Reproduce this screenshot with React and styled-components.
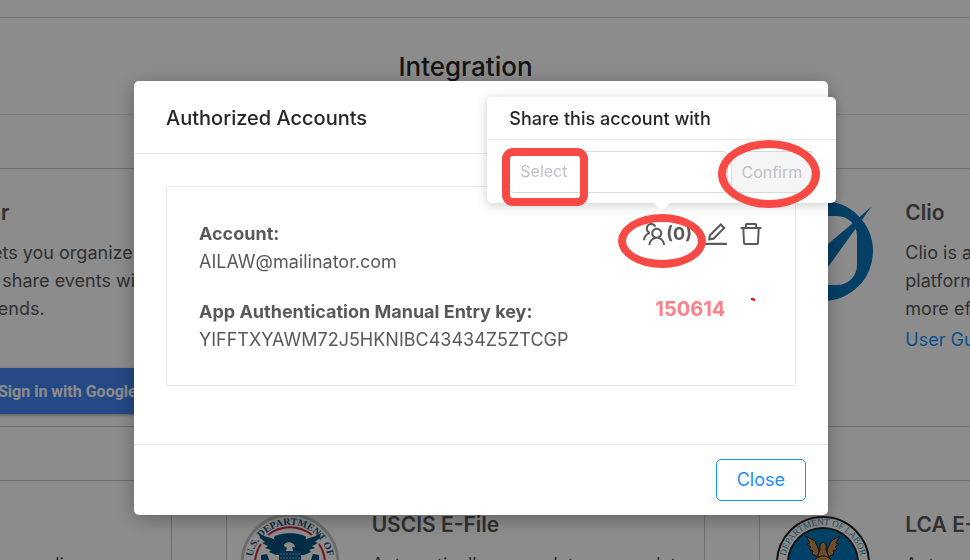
import { useState } from "react";
import styled, { createGlobalStyle } from "styled-components";
import { AiOutlineDelete, AiOutlineEdit, AiOutlineTeam } from "react-icons/ai";

const ClioLogo = () => (
  <svg width="100" height="100" viewBox="0 0 100 100" fill="#0a74b8">
    <path
      fillRule="evenodd"
      d="M50 0a50 50 0 1 0 0 100a50 50 0 1 0 0-100zM36 15h28a20 20 0 0 1 20 20v29a20 20 0 0 1-20 20H36a20 20 0 0 1-20-20V35a20 20 0 0 1 20-20z"
    />
    <path d="M99 5L55 66L38 86L24 60L36 58L55 43L80 22z" />
  </svg>
);

const HomelandSeal = () => (
  <svg width="100" height="100" viewBox="0 0 100 100">
    <circle cx="50" cy="50" r="48" fill="#fff" stroke="#c4c4c4" strokeWidth="3" />
    <path id="homeland-arc" d="M13 58.600A38 38 0 1 1 87 58.600" fill="none" />
    <text fill="#12507f" fontSize="10" fontFamily="Liberation Serif, serif" fontWeight="700">
      <textPath href="#homeland-arc" startOffset="50%" textAnchor="middle">
        U.S. DEPARTMENT OF
      </textPath>
    </text>
    <g fill="none" stroke="#d0203f" strokeWidth="2">
      <path d="M28 22A35 35 0 0 1 72 22" />
      <path d="M15 50A35 35 0 0 1 21 31" />
      <path d="M79 31A35 35 0 0 1 85 50" />
    </g>
    <g fill="#07507f">
      <path d="M34 24C40 19 60 19 66 24L64 38H36z" />
      <path d="M19 20L24 23L31 25L36 27L42 33L43 42L36 42L29 39L31 37L25 35L28 33L22 30L25 29L20 25z" />
      <path d="M81 20L76 23L69 25L64 27L58 33L57 42L64 42L71 39L69 37L75 35L72 33L78 30L75 29L80 25z" />
      <path d="M21 42L27 41L31 52H21zM79 42L73 41L69 52H79z" />
    </g>
    <path d="M44 33C44 28 54 28 55 34L52 34L54 40H45L47 35z" fill="#fff" />
    <path d="M39 38H61V52H39z" fill="#0e5e94" />
    <path d="M40 41H60M40 45H60M40 49H60" stroke="#8aaec8" strokeWidth="1" strokeDasharray="2 1" />
  </svg>
);

const LaborSeal = () => (
  <svg width="100" height="100" viewBox="0 0 100 100">
    <circle cx="50" cy="50" r="46" fill="#fff" stroke="#222" strokeWidth="2" />
    <circle cx="50" cy="50" r="35" fill="#0078bc" stroke="#222" strokeWidth="2" />
    <path id="labor-arc" d="M13 58.600A38 38 0 1 1 87 58.600" fill="none" />
    <text fill="#2f87bd" fontSize="9" fontFamily="Liberation Serif, serif">
      <textPath href="#labor-arc" startOffset="50%" textAnchor="middle">
        DEPARTMENT OF LABOR
      </textPath>
    </text>
    <g fill="#c68b50" stroke="#2d2219" strokeWidth="1">
      <path d="M33 23L42 28L46 37L45 44L39 41L40 38L36 36L38 34L34 31L37 30z" />
      <path d="M67 23L58 28L54 37L55 44L61 41L60 38L64 36L62 34L66 31L63 30z" />
      <path d="M47 31L50 29L53 31L53 37L56 44H44L47 37z" />
      <path d="M42 46L48 43H52L58 46L55 51H45z" />
    </g>
  </svg>
);

const GoogleMark = () => (
  <svg width="18" height="18" viewBox="0 0 18 18">
    <path fill="#4285f4" d="M17 9.2c0-.6 0-1.1-.2-1.6H9v3.1h4.500a4 4 0 0 1-1.700 2.600v2h2.700A8.500 8.500 0 0 0 17 9.200z" />
    <path fill="#34a853" d="M9 17.200c2.300 0 4.200-.8 5.500-2l-2.700-2A5 5 0 0 1 4.200 10.600H1.400v2.200A8.200 8.200 0 0 0 9 17.200z" />
    <path fill="#fbbc05" d="M4.200 10.600a5 5 0 0 1 0-3.200V5.200H1.400a8.200 8.200 0 0 0 0 7.600z" />
    <path fill="#ea4335" d="M9 4.100c1.300 0 2.400.4 3.300 1.300l2.400-2.400A8.200 8.200 0 0 0 1.400 5.200l2.800 2.200A5 5 0 0 1 9 4.100z" />
  </svg>
);

const SharePopover = () => {
  const [user, setUser] = useState("");

  return (
    <Popover role="dialog" aria-label="Share this account with">
      <PopoverTitle>Share this account with</PopoverTitle>
      <PopoverBody>
        <SelectField>
          <UserSelect
            aria-label="Share this account with"
            value={user}
            onChange={(e) => setUser(e.target.value)}
          >
            <option value="">Select</option>
          </UserSelect>
          <Ring $left={-7} $top={-3} $width={86} $height={58} $radius="11px" />
        </SelectField>
        <ConfirmField>
          <ConfirmButton disabled={!user}>Confirm</ConfirmButton>
          <Ring $left={-13} $top={-11} $width={102} $height={68} />
        </ConfirmField>
      </PopoverBody>
    </Popover>
  );
};

const AccountModal = () => (
  <Overlay>
    <Modal role="dialog" aria-label="Authorized Accounts">
      <ModalHeader>
        <ModalTitle>Authorized Accounts</ModalTitle>
      </ModalHeader>
      <ModalBody>
        <AccountCard>
          <AccountInfo>
            <Field>
              <dt>Account:</dt>
              <dd>AILAW@mailinator.com</dd>
            </Field>
            <Field>
              <dt>App Authentication Manual Entry key:</dt>
              <dd>YIFFTXYAWM72J5HKNIBC43434Z5ZTCGP</dd>
            </Field>
          </AccountInfo>
          <AccountSide>
            <Actions>
              <ShareAction>
                <IconButton aria-label="Share account">
                  <AiOutlineTeam size={28} />
                  <ShareCount>(0)</ShareCount>
                </IconButton>
                <Ring $left={-22} $top={-6} $width={88} $height={54} />
                <SharePopover />
              </ShareAction>
              <IconButton aria-label="Edit account">
                <AiOutlineEdit size={28} />
              </IconButton>
              <IconButton aria-label="Delete account">
                <AiOutlineDelete size={28} />
              </IconButton>
            </Actions>
            <CodeRow>
              <Code>150614</Code>
              <svg width="28" height="28" viewBox="0 0 28 28">
                <path d="M14 3h2l2 1v2l-4-1z" fill="#f00" />
              </svg>
            </CodeRow>
          </AccountSide>
        </AccountCard>
      </ModalBody>
      <ModalFooter>
        <CloseButton>Close</CloseButton>
      </ModalFooter>
    </Modal>
  </Overlay>
);

const App = () => {
  return (
    <>
      <GlobalStyle />
      <Page>
        <TopBar />
        <TitleBar>
          <h1>Integration</h1>
        </TitleBar>
        <Cards>
          <Card>
            <Logo />
            <CardText $indent={2}>
              <h2>Google Calendar</h2>
              <p>Google Calendar lets you organize your schedule and share events with co-workers and friends.</p>
            </CardText>
            <GoogleButton>
              <GoogleIcon>
                <GoogleMark />
              </GoogleIcon>
              Sign in with Google
            </GoogleButton>
          </Card>
          <Card />
          <Card>
            <Logo>
              <ClioLogo />
            </Logo>
            <CardText>
              <h2>Clio</h2>
              <p>Clio is a legal practice management platform that helps law firms to run more efficiently.</p>
              <a href="#guide">User Guide</a>
            </CardText>
          </Card>
          <Card>
            <Logo />
            <CardText>
              <h2>Forms</h2>
              <p>Manage all your cases online</p>
            </CardText>
          </Card>
          <Card>
            <Logo>
              <HomelandSeal />
            </Logo>
            <CardText>
              <h2>USCIS E-File</h2>
              <p>Automatically run updates, case data</p>
            </CardText>
          </Card>
          <Card>
            <Logo>
              <LaborSeal />
            </Logo>
            <CardText>
              <h2>LCA E-File</h2>
              <p>Automatically run updates, case data</p>
            </CardText>
          </Card>
        </Cards>
      </Page>
      <AccountModal />
    </>
  );
};

export default App;

const GlobalStyle = createGlobalStyle`
  * {
    box-sizing: border-box;
  }

  body {
    margin: 0;
    overflow: hidden;
    background: #fff;
    color: #595959;
    font-family: Inter, "Liberation Sans", sans-serif;
    font-size: 18px;
    line-height: 28px;
  }

  h1, h2, p, dl, dd {
    margin: 0;
  }

  button, select {
    font-family: inherit;
  }
`;

const Page = styled.div`
  height: 100vh;
  overflow: hidden;
`;

const TopBar = styled.header`
  height: 18px;
  border-bottom: 1px solid #d0d0d0;
`;

const TitleBar = styled.div`
  padding: 31px 39px 29px 0;
  border-bottom: 1px solid #e8e8e8;
  text-align: center;

  h1 {
    color: #262626;
    font-size: 26px;
    font-weight: 500;
    line-height: 36px;
  }
`;

/* the outer columns run past both edges of the window */
const Cards = styled.main`
  display: grid;
  grid-template-columns: repeat(3, 1fr);
  grid-auto-rows: 259px;
  gap: 53px 54px;
  margin: 53px -269px 0 -308px;
`;

const Card = styled.section`
  display: grid;
  grid-template-columns: 100px 1fr;
  grid-template-rows: 1fr auto;
  column-gap: 32px;
  padding: 32px 13px 12px;
  border: 1px solid #c8c8c8;
`;

const Logo = styled.div`
  width: 100px;
  height: 100px;
`;

const CardText = styled.div`
  padding-left: ${({ $indent }) => $indent || 0}px;

  h2 {
    margin-bottom: 14px;
    font-size: 21px;
    font-weight: 600;
    line-height: 24px;
  }

  a {
    display: block;
    margin-top: 3px;
    color: #1890ff;
    text-decoration: none;
  }
`;

const GoogleButton = styled.button`
  grid-column: 2;
  justify-self: start;
  display: flex;
  align-items: center;
  gap: 14px;
  height: 46px;
  margin-left: 102px;
  padding: 0 16px 0 2px;
  border: none;
  background: #4285f4;
  box-shadow: 0 1px 3px rgba(0, 0, 0, 0.4);
  color: #fff;
  font-family: Roboto, sans-serif;
  font-size: 16px;
  font-weight: 700;
  white-space: nowrap;
`;

const GoogleIcon = styled.span`
  display: flex;
  padding: 12px;
  background: #fff;
`;

const Overlay = styled.div`
  position: fixed;
  inset: 0;
  padding: 81px 142px 45px 134px;
  background: rgba(0, 0, 0, 0.45);
`;

const Modal = styled.div`
  border-radius: 5px;
  background: #fff;
  box-shadow: 0 4px 20px rgba(0, 0, 0, 0.3);
`;

const ModalHeader = styled.div`
  padding: 23px 32px 21px;
  border-bottom: 1px solid #e8e8e8;
`;

const ModalTitle = styled.h2`
  color: #262626;
  font-size: 20px;
  font-weight: 500;
  line-height: 28px;
`;

const ModalBody = styled.div`
  padding: 32px 32px 58px;
`;

const ModalFooter = styled.div`
  display: flex;
  justify-content: flex-end;
  padding: 14px 22px;
  border-top: 1px solid #e8e8e8;
`;

const AccountCard = styled.div`
  display: flex;
  justify-content: space-between;
  padding: 33px 30px 31px 32px;
  border: 1px solid #e8e8e8;
  border-radius: 2px;
`;

const AccountInfo = styled.dl`
  display: flex;
  flex-direction: column;
  gap: 22px;
`;

const Field = styled.div`
  dt {
    font-weight: 700;
  }
`;

const AccountSide = styled.div`
  display: flex;
  flex-direction: column;
  gap: 47px;
`;

const Actions = styled.div`
  display: flex;
  gap: 7px;
`;

const IconButton = styled.button`
  display: flex;
  align-items: center;
  padding: 0;
  border: none;
  background: none;
  color: #595959;
  font-size: 18px;
  line-height: 28px;
  cursor: pointer;
`;

const ShareAction = styled.div`
  position: relative;
  z-index: 1;
  margin-right: 3px;
`;

const ShareCount = styled.b`
  margin-left: -2px;
`;

const CodeRow = styled.div`
  display: flex;
  justify-content: space-between;
  padding-left: 15px;
`;

const Code = styled.span`
  color: #ff8088;
  font-size: 20px;
  font-weight: 700;
`;

const Popover = styled.div`
  position: absolute;
  bottom: calc(100% + 17px);
  left: -153px;
  width: 349px;
  border-radius: 5px;
  background: #fff;
  box-shadow: 0 2px 12px rgba(0, 0, 0, 0.2);

  &::after {
    content: "";
    position: absolute;
    top: 100%;
    left: 50%;
    margin-left: -8px;
    border: 8px solid transparent;
    border-top-color: #fff;
    border-bottom: none;
  }
`;

const PopoverTitle = styled.div`
  padding: 8px 22px 6px;
  border-bottom: 1px solid #e8e8e8;
  color: #262626;
  font-weight: 500;
`;

const PopoverBody = styled.div`
  display: flex;
  gap: 3px;
  padding: 11px 24px 10px 22px;
`;

const SelectField = styled.div`
  position: relative;
  flex: 1;
`;

const UserSelect = styled.select`
  appearance: none;
  width: 100%;
  height: 42px;
  padding: 0 10px 2px;
  border: 1px solid #d9d9d9;
  border-radius: 5px;
  background: #fff;
  color: #bfc1c8;
  font-size: 16px;
`;

const ConfirmField = styled.div`
  position: relative;
`;

const ConfirmButton = styled.button`
  height: 42px;
  padding: 0 9px;
  border: 1px solid #d9d9d9;
  background: #f5f5f5;
  color: #bfc1c8;
  font-size: 16px;
`;

const CloseButton = styled.button`
  height: 42px;
  padding: 0 20px 2px;
  border: 1px solid #1890ff;
  border-radius: 5px;
  background: #fff;
  color: #1890ff;
  font-size: 18px;
  cursor: pointer;
`;

const Ring = styled.span`
  position: absolute;
  z-index: 1;
  top: ${({ $top }) => $top}px;
  left: ${({ $left }) => $left}px;
  width: ${({ $width }) => $width}px;
  height: ${({ $height }) => $height}px;
  border: 8px solid #f74a45;
  border-radius: ${({ $radius }) => $radius || "50%"};
  pointer-events: none;
`;
